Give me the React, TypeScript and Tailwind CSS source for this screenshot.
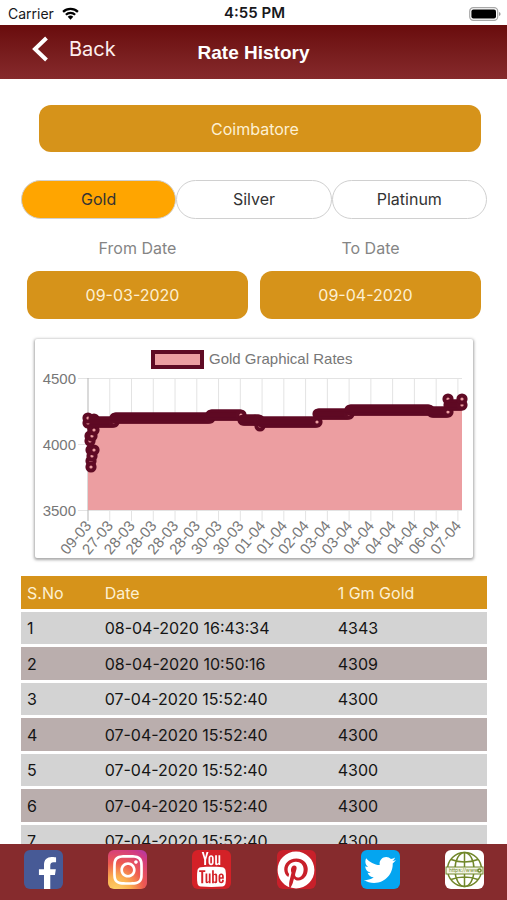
import { useState } from "react"
import { FaFacebookF, FaInstagram, FaPinterest, FaTwitter } from "react-icons/fa"
import { TfiYoutube } from "react-icons/tfi"

interface RateType {
    id: number,
    date: string,
    rate: number,
}

interface SegmentType {
    from: number,
    to: number,
    y: number,
}

const metals = ["Gold", "Silver", "Platinum"]

const rates: RateType[] = [
    { id: 1, date: "08-04-2020 16:43:34", rate: 4343 },
    { id: 2, date: "08-04-2020 10:50:16", rate: 4309 },
    { id: 3, date: "07-04-2020 15:52:40", rate: 4300 },
    { id: 4, date: "07-04-2020 15:52:40", rate: 4300 },
    { id: 5, date: "07-04-2020 15:52:40", rate: 4300 },
    { id: 6, date: "07-04-2020 15:52:40", rate: 4300 },
    { id: 7, date: "07-04-2020 15:52:40", rate: 4300 },
]

const days = [
    "09-03", "27-03", "28-03", "28-03", "28-03", "28-03", "30-03", "30-03", "01-04",
    "01-04", "02-04", "03-04", "03-04", "04-04", "04-04", "04-04", "06-04", "07-04",
]

// first day of the range, rates jump around a lot
const opening = [
    [53, 84], [53, 79], [55, 97], [56, 111], [56, 122], [56, 128],
    [57, 117], [59, 111], [55, 102], [57, 97], [59, 91], [59, 80],
]

const segments: SegmentType[] = [
    { from: 60, to: 79, y: 83 },
    { from: 80, to: 175, y: 79 },
    { from: 176, to: 206, y: 76 },
    { from: 208, to: 224, y: 81 },
    { from: 225, to: 225, y: 87 },
    { from: 227, to: 282, y: 83 },
    { from: 283, to: 314, y: 75 },
    { from: 315, to: 394, y: 71 },
    { from: 397, to: 413, y: 73 },
    { from: 413, to: 413, y: 60 },
    { from: 414, to: 427, y: 66 },
    { from: 427, to: 427, y: 60 },
]

const points = [...opening]
segments.forEach((segment) => {
    for (let x = segment.from; x <= segment.to; x++) {
        points.push([x, segment.y])
    }
})

const line = points.map(([x, y]) => `${x},${y}`).join(" ")
const area = segments.map(({ from, to, y }) => `${from},${y} ${to},${y}`).join(" ")

const StatusBar = () => (
    <div className="grid grid-cols-[1fr_auto_1fr] items-center h-[25px] shrink-0 ps-2 pe-[6px] pt-[2px] text-[14px] text-zinc-900">
        <div className="flex items-center gap-2">
            <span>Carrier</span>
            <svg viewBox="0 0 18 14" className="w-[17px] h-[13px]" fill="none" stroke="#000" strokeWidth="2.4">
                <path d="M1 5.2a11.5 11.5 0 0 1 16 0" />
                <path d="M4 8.4a7.2 7.2 0 0 1 10 0" />
                <path d="M9 13.6 6 10.6a4.3 4.3 0 0 1 6 0Z" fill="#000" stroke="none" />
            </svg>
        </div>
        <span className="text-center text-[15px] font-semibold whitespace-nowrap">4:55 PM</span>
        <svg viewBox="0 0 32 14" className="w-8 h-[14px] justify-self-end">
            <rect x="0.7" y="0.7" width="28" height="12.6" rx="3.6" fill="#fff" stroke="#a8a8a8" strokeWidth="1.2" />
            <rect x="2.4" y="2.4" width="24.6" height="9.2" rx="2" fill="#000" />
            <path d="M30 5v4q1.6-.6 1.6-2T30 5Z" fill="#999" />
        </svg>
    </div>
)

const Header = () => (
    <header className="grid grid-cols-[1fr_auto_1fr] items-center h-[54px] shrink-0 bg-linear-to-b from-[#690b0c] to-[#862a2c] text-white">
        <button className="flex items-center gap-5 ps-8 pb-[6px] text-[20px] text-[#fdeeee]">
            <svg viewBox="0 0 17 26" className="w-[17px] h-[26px]" fill="none" stroke="#fff" strokeWidth="4">
                <path d="M14.500 2 3 13l11.500 11" />
            </svg>
            Back
        </button>
        <h1 className="pt-[2px] font-['Liberation_Sans',sans-serif] text-[19px] font-bold">Rate History</h1>
        <span />
    </header>
)

const RateChart = () => (
    <svg viewBox="0 0 438 219" className="block w-full font-['Liberation_Sans',sans-serif] text-[15px]" role="img" aria-label="Gold Graphical Rates">
        <rect x="118" y="13" width="49" height="15" fill="#ec9ea1" stroke="#5f0a24" strokeWidth="4" />
        <text x="174" y="25" fill="#777">Gold Graphical Rates</text>
        { [4500, 4000, 3500].map((value, index) => (
            <g key={value}>
                <path d={`M43 ${39.5 + index * 66}H427`} stroke="#e3e3e3" />
                <text x="41" y={45 + index * 66} textAnchor="end" fill="#777">{value}</text>
            </g>
        ))}
        { days.map((day, index) => {
            const x = 53 + index * 21.76
            return (
                <g key={index}>
                    <path d={`M${x} 39V182`} stroke={index === 0 ? "#b5b5b5" : "#e3e3e3"} />
                    <text textAnchor="end" fill="#777" transform={`translate(${x + 4} 187) rotate(-50)`}>{day}</text>
                </g>
            )
        })}
        <polygon points={`53,171 53,84 ${area} 427,171`} fill="#ec9ea1" />
        <polyline points={line} fill="none" stroke="#5f0a24" strokeWidth="4" strokeLinejoin="round" />
        { points.map(([x, y], index) => (
            <circle key={index} cx={x} cy={y} r="3.6" fill="#ec9ea1" stroke="#5f0a24" strokeWidth="4" />
        ))}
    </svg>
)

const RateTable = () => (
    <table className="w-full border-separate border-spacing-x-0 border-spacing-y-[3px] text-[16px] leading-6 text-[#151515]">
        <thead>
            <tr className="h-[33px] bg-[#d6931a] text-[#fdf0d2] text-left">
                <th className="w-1/6 ps-[6px] p-0 font-normal">S.No</th>
                <th className="w-1/2 ps-[6px] p-0 font-normal">Date</th>
                <th className="ps-[6px] p-0 font-normal">1 Gm Gold</th>
            </tr>
        </thead>
        <tbody>
            { rates.map((rate) => (
                <tr key={rate.id} className="h-8 even:h-[33px] bg-[#d3d3d3] even:bg-[#baaead]">
                    <td className="ps-[6px] p-0">{rate.id}</td>
                    <td className="ps-[6px] p-0">{rate.date}</td>
                    <td className="ps-[6px] p-0">{rate.rate}</td>
                </tr>
            ))}
        </tbody>
    </table>
)

const Globe = () => (
    <svg viewBox="0 0 39 39" className="w-full h-full" fill="none" stroke="#71872a" strokeWidth="1.5">
        <circle cx="19.5" cy="19.5" r="17" />
        <ellipse cx="19.5" cy="19.5" rx="9.5" ry="17" />
        <path d="M19.5 2.5v34M6 9.5q13.5 5 27 0M6 29.5q13.5-5 27 0" />
        <rect x="1" y="17" width="37" height="7" fill="#f3f5e6" strokeWidth="1" />
        <text x="4" y="22" fill="#71872a" stroke="none" className="text-[5px]">https://www.</text>
        <circle cx="34.5" cy="20.5" r="1.6" />
    </svg>
)

const Footer = () => {
    const tile = "flex items-center justify-center size-[39px] rounded-md overflow-hidden text-white"

    return (
        <footer className="flex items-start justify-between h-14 shrink-0 ps-6 pe-[23px] pt-[6px] bg-[#862b2d]">
            <a href="#facebook" aria-label="Facebook" className={`${tile} bg-[#475a96]`}>
                <FaFacebookF className="size-8 mt-[7px] ms-2" />
            </a>
            <a href="#instagram" aria-label="Instagram" className={`${tile} bg-[radial-gradient(circle_at_20%_105%,#fdd26a_0%,#fbb04f_28%,#ee5a50_55%,#d03a86_85%,#a83ab0_100%)]`}>
                <FaInstagram className="size-[34px]" />
            </a>
            <a href="#youtube" aria-label="YouTube" className={`${tile} bg-[#d42127]`}>
                <TfiYoutube className="size-[35px]" />
            </a>
            <a href="#pinterest" aria-label="Pinterest" className={`${tile} bg-[#c8202a]`}>
                <FaPinterest className="size-[38px]" />
            </a>
            <a href="#twitter" aria-label="Twitter" className={`${tile} bg-[#04a5f0]`}>
                <FaTwitter className="size-8" />
            </a>
            <a href="#website" aria-label="Website" className={`${tile} bg-white`}>
                <Globe />
            </a>
        </footer>
    )
}

const App = () => {
    const [metal, setMetal] = useState("Gold")

    return (
        <div className="flex flex-col w-full h-screen bg-white font-[Inter,sans-serif]">
            <StatusBar />
            <Header />
            <main className="flex-1 min-h-0 overflow-hidden ps-[21px] pe-5 pt-[26px] text-[16px] leading-6">
                <div className="ps-[18px] pe-[6px]">
                    <button className="w-full h-[47px] pe-[10px] rounded-xl bg-[#d6931a] text-[#fdf0d2]">Coimbatore</button>
                </div>
                <div className="grid grid-cols-3 mt-7">
                    { metals.map((name) => (
                        <button
                            key={name}
                            className={`h-[39px] pb-[2px] rounded-full border border-[#d0d0d0] text-[#333] ${metal === name ? "bg-[#ffa500]" : "bg-white"}`}
                            aria-pressed={metal === name}
                            onClick={() => setMetal(name)}
                        >{name}</button>
                    ))}
                </div>
                <div className="grid grid-cols-2 gap-3 px-[6px] mt-[17px] text-center">
                    <div>
                        <label htmlFor="from" className="block text-[#858585]">From Date</label>
                        <button id="from" className="w-full h-12 mt-[11px] pe-[10px] rounded-xl bg-[#d6931a] text-[#fdf0d2]">09-03-2020</button>
                    </div>
                    <div>
                        <label htmlFor="to" className="block text-[#858585]">To Date</label>
                        <button id="to" className="w-full h-12 mt-[11px] pe-[10px] rounded-xl bg-[#d6931a] text-[#fdf0d2]">09-04-2020</button>
                    </div>
                </div>
                <div className="mx-[14px] mt-5 mb-[15px] rounded-xs bg-white shadow-[0_1px_3px_1px_rgba(0,0,0,0.35)]">
                    <RateChart />
                </div>
                <RateTable />
            </main>
            <Footer />
        </div>
    )
}

export default App
